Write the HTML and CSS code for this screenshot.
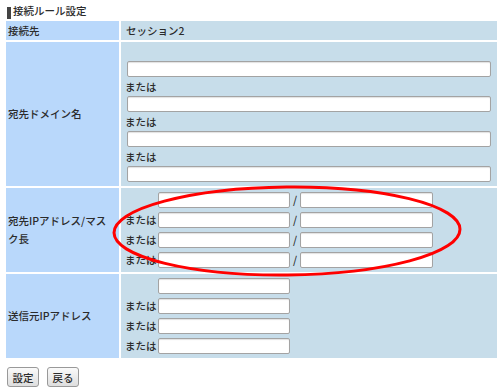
FILE: index.html
```html
<!DOCTYPE html>
<html lang="ja">
<head>
  <meta charset="UTF-8" />
  <meta name="viewport" content="width=device-width, initial-scale=1.0"/>
  <title>接続ルール設定</title>
  <link rel="stylesheet" href="styles.css">
</head>
<body>

  <div class="page">
    <h1 class="title"><span class="title-bar"></span><span>接続ルール設定</span></h1>

    <table class="rule-table">
      <tr class="row-session">
        <th>接続先</th>
        <td>セッション2</td>
      </tr>
      <tr>
        <th>宛先ドメイン名</th>
        <td class="domain-cell">
          <input type="text" class="wide-input" />
          <div class="or-label">または</div>
          <input type="text" class="wide-input" />
          <div class="or-label">または</div>
          <input type="text" class="wide-input" />
          <div class="or-label">または</div>
          <input type="text" class="wide-input" />
        </td>
      </tr>
      <tr>
        <th class="label-wrap">宛先IPアドレス/マスク長</th>
        <td class="grid-cell">
          <div class="ip-grid mask-grid">
            <span></span><input type="text" /><span class="slash">/</span><input type="text" />
            <span>または</span><input type="text" /><span class="slash">/</span><input type="text" />
            <span>または</span><input type="text" /><span class="slash">/</span><input type="text" />
            <span>または</span><input type="text" /><span class="slash">/</span><input type="text" />
          </div>
        </td>
      </tr>
      <tr>
        <th>送信元IPアドレス</th>
        <td class="grid-cell">
          <div class="ip-grid">
            <span></span><input type="text" />
            <span>または</span><input type="text" />
            <span>または</span><input type="text" />
            <span>または</span><input type="text" />
          </div>
        </td>
      </tr>
    </table>

    <div class="buttons">
      <button class="btn">設定</button>
      <button class="btn">戻る</button>
    </div>

    <!-- annotation drawn over the mask rows -->
    <svg class="mark" width="500" height="391" viewBox="0 0 500 391">
      <ellipse cx="287" cy="231" rx="173" ry="44" fill="none" stroke="#ff0000" stroke-width="3" transform="rotate(-0.6 287 231)" />
    </svg>
  </div>

</body>
</html>
```

FILE: styles.css
```css
* { margin: 0; padding: 0; box-sizing: border-box; }

body {
  font-family: "Noto Sans CJK JP", "Noto Sans", sans-serif;
  font-size: 10.5px;
  font-weight: 500;
  color: #2b2b2b;
  background: #fff;
}

.page {
  position: relative;
  width: 500px;
  height: 391px;
}

.title {
  display: flex;
  align-items: flex-start;
  height: 19px;
  padding-left: 7px;
  font-size: 10.5px;
  font-weight: 500;
  color: #2b2b2b;
}

.title-bar {
  width: 4px;
  height: 12px;
  margin-top: 7px;
  margin-right: 2px;
  background: #444;
}

.title span:last-child {
  line-height: 12px;
  margin-top: 5px;
}

.rule-table {
  margin-left: 4px;
  width: 495px;
  border-spacing: 2px;
  background: #fff;
}

.rule-table th {
  width: 113px;
  padding: 0 4px 0 2px;
  background: #b9d8fb;
  font-weight: 500;
  text-align: left;
  vertical-align: middle;
  line-height: 18px;
}

.rule-table td {
  background: #c7ddea;
  vertical-align: top;
}

.row-session td,
.row-session th {
  height: 19px;
  line-height: 19px;
}

.row-session td {
  padding-left: 5px;
}

.label-wrap {
  padding-right: 6px;
}

input {
  display: block;
  height: 16px;
  background: #fff;
  border: 1px solid #a3a3a3;
  border-radius: 2px;
  box-shadow: inset 0 1px 1px rgba(0, 0, 0, 0.12);
  font-family: inherit;
  font-size: 10.5px;
}

.domain-cell {
  padding: 19px 0 4px 4px;
}

.wide-input {
  width: 364px;
  margin-left: 2px;
}

.or-label {
  line-height: 19px;
}

.grid-cell {
  padding: 4px 0 4px 4px;
}

.ip-grid {
  display: grid;
  grid-template-columns: 33px 132px;
  row-gap: 4px;
  align-items: center;
}

.mask-grid {
  grid-template-columns: 33px 132px 10px 133px;
}

.ip-grid span {
  line-height: 16px;
}

.slash {
  text-align: center;
}

.buttons {
  display: flex;
  gap: 8px;
  padding: 7px 0 0 7px;
}

.btn {
  width: 32px;
  height: 20px;
  font-family: inherit;
  font-size: 10.5px;
  font-weight: 500;
  color: #2b2b2b;
  background: linear-gradient(#fafafa, #dedede);
  border: 1px solid #999;
  border-radius: 3px;
  cursor: pointer;
}

.mark {
  position: absolute;
  left: 0;
  top: 0;
  pointer-events: none;
}
```
